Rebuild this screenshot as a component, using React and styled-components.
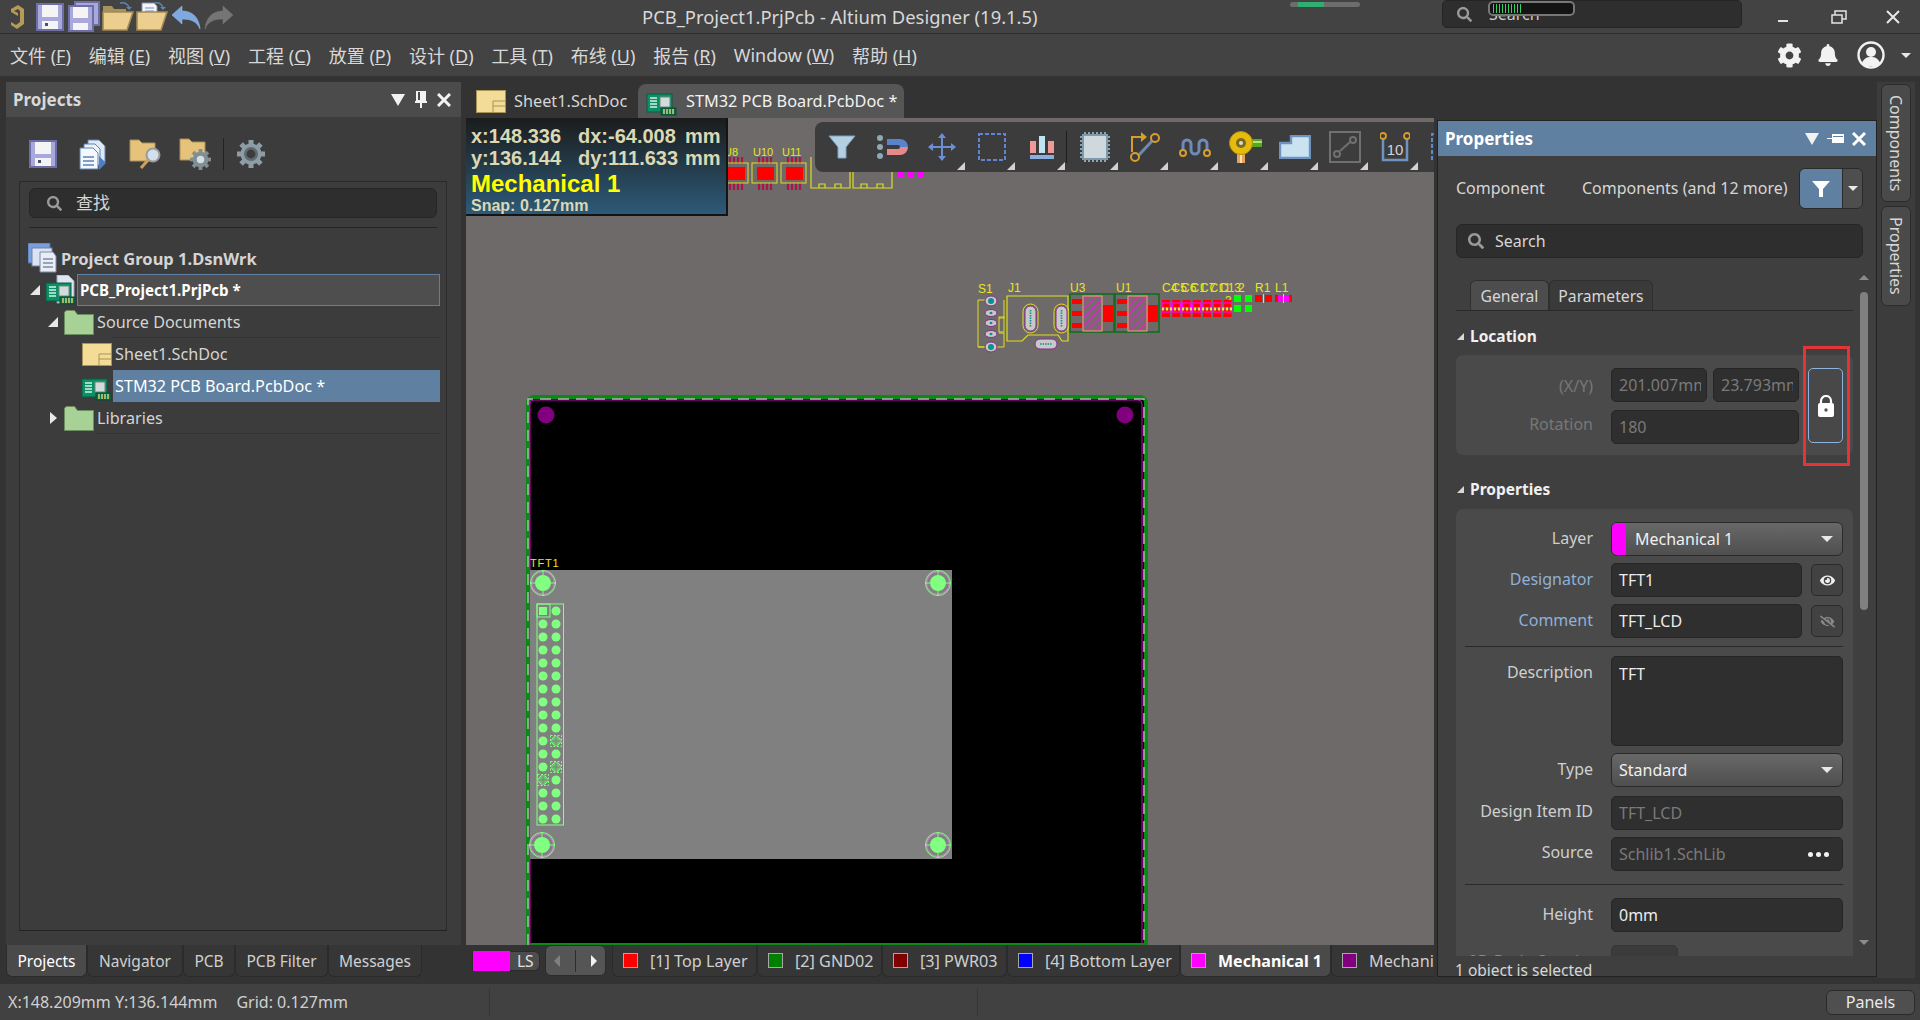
import React from 'react';
import styled, { createGlobalStyle } from 'styled-components';
import { FaCog, FaBell, FaSearch, FaEye, FaEyeSlash } from 'react-icons/fa';

const ui = `"Noto Sans", "Noto Sans CJK SC", sans-serif`;
const Global = createGlobalStyle`
  html, body { margin: 0; padding: 0; background: #333; }
  * { box-sizing: border-box; }
  body { font-family: ${ui}; color: #d6d6d6; }
  svg { display: block; flex: none; }
`;
const Root = styled.div`width:1920px;height:1020px;overflow:hidden;display:flex;flex-direction:column;background:#333;`;

/* title bar */
const TitleBar = styled.div`height:34px;flex:none;display:flex;align-items:center;background:#434343;border-bottom:1px solid #2f2f2f;`;
const Quick = styled.div`width:642px;flex:none;display:flex;align-items:center;padding-left:9px;`;
const QuickIcon = styled.span`display:block;margin-left:${p=>p.$ml||0}px;`;
const TitleText = styled.div`width:648px;flex:none;font-size:18.4px;color:#d8d8d8;white-space:nowrap;`;
const MiniBar = styled.div`width:70px;flex:none;height:5px;margin-top:-24px;border-radius:3px;background:#6d6d6d;overflow:hidden;&::before{content:"";display:block;width:26px;height:5px;margin-left:8px;background:#2fae6f;}`;
const TopSearch = styled.div`position:relative;flex:none;margin-left:82px;width:300px;height:28px;margin-top:-5px;border-radius:5px;background:#2e2e2e;border:1px solid #252525;display:flex;align-items:center;padding-left:14px;gap:17px;font-size:16px;color:#ccc;svg{color:#9a9a9a;}`;
const Pill = styled.div`position:absolute;left:45px;top:0;width:87px;height:15px;border-radius:5px;background:#141414;border:2px solid #777;display:flex;align-items:center;padding-left:3px;gap:2px;`;
const Tick = styled.i`display:block;width:1px;height:9px;background:#35d060;`;
const WinBtns = styled.div`margin-left:36px;flex:none;display:flex;align-items:center;`;
const WinBtn = styled.span`display:block;width:${p=>p.$w}px;color:#e0e0e0;`;

/* menu */
const MenuBar = styled.div`height:42px;flex:none;display:flex;align-items:center;padding-left:10px;gap:17.8px;background:#434343;font-size:18px;color:#d8d8d8;`;
const MenuItem = styled.span`white-space:nowrap;`;
const MenuRight = styled.div`margin-left:auto;display:flex;align-items:center;color:#f2f2f2;padding-right:9px;`;
const MenuIcon = styled.span`display:block;margin-left:${p=>p.$ml}px;`;
const Caret = styled.i`display:block;width:0;height:0;border-left:${p=>p.$s||5}px solid transparent;border-right:${p=>p.$s||5}px solid transparent;border-top:${p=>p.$t||p.$s||5}px solid ${p=>p.$c||'#e8e8e8'};margin-left:${p=>p.$ml||0}px;`;

/* main */
const Main = styled.div`height:908px;flex:none;display:flex;background:#333;`;
const LeftCol = styled.div`width:461px;flex:none;padding:6px 0 0 6px;display:flex;flex-direction:column;`;
const Panel = styled.div`height:863px;background:#3c3c3c;display:flex;flex-direction:column;`;
const PanelHead = styled.div`height:35px;flex:none;background:${p=>p.$active?'#5f80a1':'#4b4b4b'};display:flex;align-items:center;padding:0 10px 0 7px;font-size:17px;font-weight:700;color:${p=>p.$active?'#fff':'#d8d8d8'};`;
const HeadTools = styled.div`margin-left:auto;display:flex;align-items:center;gap:${p=>p.$gap||10}px;`;
const ToolStrip = styled.div`height:64px;flex:none;display:flex;align-items:center;padding:10px 0 0 23px;`;
const StripSep = styled.i`display:block;width:1px;height:32px;background:#222;margin:0 13px 0 11px;`;
const StripIcon = styled.span`display:block;margin-right:${p=>p.$mr||0}px;`;
const TreeBox = styled.div`height:750px;margin:0 14px 0 13px;border:1px solid #2a2a2a;border-bottom-color:#222;display:flex;flex-direction:column;`;
const SearchField = styled.div`height:${p=>p.$h||30}px;flex:none;margin:${p=>p.$m||'6px 9px 0'};background:#2e2e2e;border:1px solid #262626;border-radius:6px;display:flex;align-items:center;padding-left:${p=>p.$pad||17}px;gap:${p=>p.$gap||14}px;font-size:${p=>p.$fs||17}px;color:#d6d6d6;svg{color:#9a9a9a;}`;
const SearchLabel = styled.span`margin-top:${p=>p.$up?-3:-1}px;`;
const TreeRule0 = styled.div`height:1px;background:#262626;margin:9px 9px 0;`;
const Tree = styled.div`margin-top:14px;display:flex;flex-direction:column;`;
const Row = styled.div`height:32px;flex:none;display:flex;align-items:center;padding-left:${p=>p.$pad}px;font-size:16.2px;color:#d4d4d4;white-space:nowrap;`;
const Rule = styled.div`height:1px;margin:-1px 6px 0 ${p=>p.$left}px;background:#333;`;
const Exp = styled.span`display:flex;width:${p=>p.$w}px;flex:none;align-items:center;`;
const TriOpen = styled.i`display:block;width:0;height:0;border-left:10px solid transparent;border-bottom:10px solid #e8e8e8;`;
const TriClosed = styled.i`display:block;width:0;height:0;border-top:6px solid transparent;border-bottom:6px solid transparent;border-left:7px solid #e8e8e8;margin-left:2px;`;
const RowText = styled.span`margin-left:${p=>p.$ml||3}px;font-weight:${p=>p.$bold?700:400};font-size:${p=>p.$bold?'16.5px':'inherit'};`;
const RowBox = styled.div`margin-right:6px;flex:1;height:32px;display:flex;align-items:center;padding-left:2px;font-weight:${p=>p.$focus?700:400};font-size:${p=>p.$focus?'15.1px':'16.2px'};color:#fff;background:${p=>p.$focus?'#4e4e4e':'#5f80a1'};border:${p=>p.$focus?'1px solid #5f80a1':'none'};`;

const BottomTabs = styled.div`height:32px;flex:none;display:flex;`;
const BTab = styled.div`width:${p=>p.$w}px;flex:none;height:32px;display:flex;align-items:center;justify-content:center;font-size:15.5px;white-space:nowrap;background:${p=>p.$on?'#4a4a4a':'#363636'};color:${p=>p.$on?'#fff':'#cfcfcf'};border:1px solid #2b2b2b;border-top:none;border-radius:0 0 6px 6px;`;
const LayerTab = styled.div`width:${p=>p.$w}px;flex:none;height:32px;display:flex;align-items:center;padding-left:10px;gap:12px;font-size:${p=>p.$on?16:16.2}px;font-weight:${p=>p.$on?700:400};white-space:nowrap;background:${p=>p.$on?'#4a4a4a':'#363636'};color:${p=>p.$on?'#fff':'#cfcfcf'};border:1px solid #2b2b2b;border-top:none;border-radius:0 0 6px 6px;`;

/* center */
const Center = styled.div`width:968px;flex:none;margin-left:5px;display:flex;flex-direction:column;`;
const DocTabs = styled.div`height:42px;flex:none;padding-top:8px;display:flex;`;
const DocTab = styled.div`display:flex;align-items:center;height:34px;width:${p=>p.$w}px;flex:none;padding-left:${p=>p.$pad}px;gap:8px;font-size:16.3px;white-space:nowrap;color:${p=>p.$on?'#f2f2f2':'#d6d6d6'};background:${p=>p.$on?'#565656':'transparent'};border-radius:8px 8px 0 0;`;
const Canvas = styled.div`position:relative;height:827px;flex:none;background:#6e6a6a;overflow:hidden;`;
const Hud = styled.div`position:absolute;left:0;top:0;width:262px;height:98px;padding:7px 0 0 5px;background:linear-gradient(#1b1c1c,#2d5a78);border:2px solid #141414;border-left:none;border-top:none;font-family:"Liberation Sans",sans-serif;font-weight:700;color:#dcd8b4;`;
const HudGrid = styled.div`display:grid;grid-template-columns:107px 107px auto;font-size:20px;line-height:22px;white-space:nowrap;`;
const HudLayer = styled.div`font-size:24px;line-height:27px;margin-top:1px;color:#ff0;`;
const HudSnap = styled.div`font-size:16px;line-height:18px;`;
const FloatBar = styled.div`position:absolute;left:349px;top:4px;width:619px;height:50px;border-radius:8px 0 0 8px;background:#3c3c3c;display:flex;align-items:center;overflow:hidden;`;
const Tool = styled.div`position:relative;width:50px;height:50px;flex:none;padding-left:4px;display:flex;align-items:center;justify-content:center;${p=>p.$tri?`&::after{content:"";position:absolute;right:0;bottom:2px;width:0;height:0;border-left:8px solid transparent;border-bottom:8px solid #d2d2d2;}`:''}`;
const ToolSep = styled.i`display:block;width:1px;height:32px;background:#1e1e1e;flex:none;margin:0 1px;`;
const Board = styled.svg`position:absolute;left:0;top:0;`;
const LayerBar = styled.div`height:32px;flex:none;display:flex;overflow:hidden;align-items:flex-start;`;
const LsGroup = styled.div`margin:6px 5px 0 6px;flex:none;width:68px;height:20px;display:flex;border-radius:0 6px 6px 0;background:#4d4d4d;border:1px solid #2b2b2b;font-size:15.5px;color:#e0e0e0;align-items:center;`;
const LsSwatch = styled.i`display:block;width:37px;height:20px;background:#f0f;`;
const LsText = styled.span`margin-left:7px;`;
const NavBtns = styled.div`width:61px;height:31px;flex:none;margin-right:6px;display:flex;align-items:center;justify-content:space-around;background:#555;border:1px solid #2b2b2b;border-radius:6px;`;
const Arrow = styled.i`display:block;width:0;height:0;border-top:6px solid transparent;border-bottom:6px solid transparent;${p=>p.$left?'border-right:6px solid #808080;':'border-left:6px solid #f2f2f2;'}`;
const NavSep = styled.i`display:block;width:1px;height:22px;background:#2e2e2e;`;
const Swatch = styled.i`display:block;width:15px;height:15px;flex:none;background:${p=>p.$c};border:1px solid #a8a8a8;`;

/* right */
const Right = styled.div`width:486px;flex:none;display:flex;`;
const Props = styled.div`width:440px;height:857px;margin:44px 0 0 3px;flex:none;background:#3f3f3f;border:1px solid #222;display:flex;flex-direction:column;overflow:hidden;`;
const FilterRow = styled.div`height:41px;flex:none;margin:12px 13px 0 18px;display:flex;align-items:center;font-size:16px;color:#d6d6d6;white-space:nowrap;`;
const FilterA = styled.span`width:126px;flex:none;margin-top:-2px;`;
const FilterB = styled.span`width:217px;flex:none;margin-top:-2px;`;
const FilterBtn = styled.div`width:64px;height:41px;flex:none;display:flex;border:1px solid #2a2a2a;border-radius:6px;overflow:hidden;`;
const FilterOn = styled.div`width:43px;background:#5f80a1;display:flex;align-items:center;justify-content:center;border-right:1px solid #2a2a2a;`;
const FilterMore = styled.div`flex:1;background:#4e4e4e;display:flex;align-items:center;justify-content:center;`;
const ScrollArea = styled.div`height:687px;flex:none;margin-top:11px;display:flex;overflow:hidden;`;
const Content = styled.div`width:397px;flex:none;margin-left:18px;`;
const TabRow = styled.div`margin-top:11px;height:31px;display:flex;padding-left:14px;border-bottom:1px solid #2a2a2a;`;
const PTab = styled.div`height:30px;width:${p=>p.$w}px;flex:none;display:flex;align-items:center;justify-content:center;font-size:15.7px;border:1px solid #2f2f2f;border-bottom:none;border-radius:6px 6px 0 0;background:${p=>p.$on?'#4d4d4d':'#3a3a3a'};color:#d6d6d6;`;
const SecHead = styled.div`height:20px;margin:${p=>p.$m};display:flex;align-items:center;gap:6px;font-size:15.5px;font-weight:700;color:#f0f0f0;`;
const SmallTri = styled.i`display:block;width:0;height:0;border-left:7px solid transparent;border-bottom:7px solid #d8d8d8;`;
const LocBox = styled.div`position:relative;height:100px;padding:13px 0 0;display:flex;align-items:flex-start;background:#4a4a4a;border-radius:7px;`;
const LocGrid = styled.div`width:343px;flex:none;display:grid;grid-template-columns:155px 1fr;row-gap:8px;grid-template-rows:34px 34px;`;
const Pair = styled.div`display:flex;gap:6px;`;
const Label = styled.div`text-align:right;padding-right:18px;font-size:16px;line-height:${p=>p.$lh||32}px;white-space:nowrap;color:${p=>p.$c||'#cfcfcf'};`;
const Input = styled.div`height:${p=>p.$h||34}px;width:${p=>p.$w?p.$w+'px':'auto'};flex:none;background:#2f2f2f;border:1px solid #262626;border-radius:5px;padding:0 5px 0 7px;display:flex;align-items:${p=>p.$top?'flex-start':'center'};justify-content:space-between;font-size:16px;color:${p=>p.$dim?'#7a7a7a':'#ececec'};`;
const Clip = styled.span`display:block;overflow:hidden;white-space:nowrap;line-height:20px;padding-top:${p=>p.$pt||0}px;`;
const LockBtn = styled.div`width:35px;height:75px;margin-left:9px;display:flex;align-items:center;justify-content:center;background:#484848;border:1px solid #8db4dc;border-radius:5px;`;
const RedMark = styled.div`position:absolute;left:347px;top:-9px;width:47px;height:120px;border:3px solid #e63333;`;
const PropBox = styled.div`background:#4a4a4a;border-radius:7px 7px 0 0;padding:13px 10px 0 0;height:460px;overflow:hidden;`;
const FormRow = styled.div`display:grid;grid-template-columns:155px 1fr ${p=>p.$btn?'41px':''};margin-top:${p=>p.$mt||0}px;`;
const Drop = styled.div`height:34px;display:flex;align-items:center;justify-content:space-between;padding-right:9px;border:1px solid #2a2a2a;border-radius:6px;background:linear-gradient(#686868,#4f4f4f);font-size:16px;color:#f0f0f0;overflow:hidden;`;
const DropSwatch = styled.i`display:block;width:14px;height:34px;background:#f0f;margin-right:9px;`;
const DropText = styled.span`flex:1;padding-left:${p=>p.$pl||0}px;`;
const SquareBtn = styled.div`width:32px;height:32px;margin:1px 0 0 9px;display:flex;align-items:center;justify-content:center;background:#424242;border:1px solid #2a2a2a;border-radius:5px;color:${p=>p.$dim?'#8a8a8a':'#eee'};`;
const Hr = styled.div`height:1px;margin:${p=>p.$m} 0 ${p=>p.$m2} 9px;background:#2a2a2a;`;
const Dots = styled.span`display:flex;gap:3px;margin-right:8px;`;
const Dot = styled.i`display:block;width:5px;height:5px;border-radius:50%;background:#f2f2f2;`;
const OpacityRow = styled.div`display:flex;opacity:.55;`;
const Scroll = styled.div`width:9px;flex:none;margin-left:6px;display:flex;flex-direction:column;align-items:center;`;
const ScrollUp = styled.i`display:block;width:0;height:0;margin-top:6px;border-left:5px solid transparent;border-right:5px solid transparent;border-bottom:5px solid #8c8c8c;`;
const ScrollDown = styled.i`display:block;width:0;height:0;margin-top:330px;border-left:5px solid transparent;border-right:5px solid transparent;border-top:5px solid #8c8c8c;`;
const Thumb = styled.i`display:block;width:8px;height:318px;margin-top:12px;border-radius:4px;background:#808080;`;
const Selected = styled.div`height:20px;flex:none;padding-left:17px;font-size:15.5px;line-height:28px;color:#d6d6d6;white-space:nowrap;`;
const Strip = styled.div`width:38px;height:896px;margin:6px 0 0 0;flex:none;background:#3c3c3c;padding:2px 0 0 4px;`;
const VTab = styled.div`writing-mode:vertical-rl;width:30px;height:${p=>p.$h}px;margin-bottom:4px;display:flex;align-items:center;justify-content:center;font-size:16px;color:#d6d6d6;background:#4a4a4a;border:1px solid #2b2b2b;border-radius:6px;`;

/* status */
const Status = styled.div`height:36px;flex:none;display:flex;align-items:center;background:#414141;font-size:16px;color:#d0d0d0;white-space:nowrap;`;
const StatText = styled.div`width:489px;flex:none;padding-left:8px;`;
const StatGrid = styled.span`margin-left:19px;`;
const StatDiv = styled.i`display:block;width:1px;height:28px;background:#353535;flex:none;margin-left:${p=>p.$ml||0}px;`;
const PanelsBtn = styled.div`margin-left:auto;margin-right:5px;width:89px;height:25px;display:flex;align-items:center;justify-content:center;background:#4f4f4f;border:1px solid #2a2a2a;border-radius:6px;color:#e8e8e8;`;

/* icons */
const Logo = () => <svg width="17" height="26" viewBox="0 0 17 26"><path d="M2 5 9 1l6 4v15l-7 5-6-4 0-3 5 3 4-3V7L9 5 5 7l4 2v3L2 8z" fill="#b79a55"/></svg>;
const Floppy = ({s=28}) => <svg width={s} height={s} viewBox="0 0 28 28"><rect width="28" height="28" fill="#6e6ea6"/><rect x="2" y="2" width="24" height="24" fill="#a8a8dc"/><rect x="6" y="2" width="16" height="12" fill="#f4f4f4"/><rect x="6" y="18" width="16" height="8" fill="#f4f4f4"/><rect x="9" y="20" width="3" height="3" fill="#456"/></svg>;
const FloppyAll = () => <svg width="32" height="31" viewBox="0 0 32 31"><rect x="6" y="0" width="26" height="25" fill="#6e6ea6"/><rect x="8" y="2" width="22" height="21" fill="#a8a8dc"/><rect x="0" y="4" width="26" height="27" fill="#6e6ea6"/><rect x="2" y="6" width="22" height="23" fill="#a8a8dc"/><rect x="5" y="6" width="15" height="11" fill="#f4f4f4"/><rect x="5" y="22" width="15" height="7" fill="#f4f4f4"/></svg>;
const OpenFolder = ({doc}) => <svg width="32" height="31" viewBox="0 0 32 31">
  {doc && <path d="M6 2h12l3 3v16H6z" fill="#f4f6fb" stroke="#8a95a8"/>}
  {doc && <path d="M9 7h9M9 10h9M9 13h9" stroke="#7a8fb8"/>}
  {!doc && <path d="M1 8V5h9l2 3h12v4H1z" fill="#a8915c"/>}
  <path d="M1 29V11h24l6 0-6 18z" fill="#eccf8e" stroke="#a48a55" strokeWidth="1.6"/>
  <path d="M18 2c4-1 7 0 9 4" stroke="#5b87b0" strokeWidth="1.5" fill="none"/><path d="M24 6h6l-3 3z" fill="#5b87b0"/>
</svg>;
const UndoGlyph = styled.svg`transform:${p=>p.$flip?'scaleX(-1)':'none'};`;
const Undo = ({gray}) => <UndoGlyph $flip={gray} width="30" height="26" viewBox="0 0 30 26"><path d="M1 11 11 2v5c10 0 17 6 18 18-3-7-8-10-18-10v5z" fill={gray?'#757575':'#7ea8e0'} stroke={gray?'#757575':'#a6c5ef'} strokeWidth=".5"/></UndoGlyph>;
const Restore = () => <svg width="16" height="14" viewBox="0 0 16 14" fill="none" stroke="#e4e4e4" strokeWidth="1.5"><rect x="1" y="5" width="10" height="8"/><path d="M4 5V1h11v8h-4"/></svg>;
const Close = ({s=14,w=2,c='#e8e8e8'}) => <svg width={s} height={s} viewBox="0 0 14 14"><path d="M1 1l12 12M13 1 1 13" stroke={c} strokeWidth={w}/></svg>;
const UserIcon = () => <svg width="28" height="28" viewBox="0 0 28 28" fill="none"><circle cx="14" cy="14" r="12.5" stroke="#f2f2f2" strokeWidth="2.4"/><circle cx="14" cy="11" r="5" fill="#f2f2f2"/><path d="M5 22c2-5 5-6 9-6s7 1 9 6l-3 3H8z" fill="#f2f2f2"/></svg>;
const Pin = ({flat}) => flat
  ? <svg width="17" height="12" viewBox="0 0 17 12"><path d="M0 5h5V1h12v9H5V6H0z" fill="#fff"/><path d="M6 3h10v1H6z" fill="#5f80a1"/></svg>
  : <svg width="12" height="17" viewBox="0 0 12 17"><path d="M1 0h10v10h1v2H7v5H5v-5H0v-2h1z" fill="#f2f2f2"/><path d="M3 1h2v8H3z" fill="#4b4b4b"/></svg>;
const PanelTri = () => <Caret $s={7} $t={12} $c="#f2f2f2"/>;
const PcbDoc = ({page}) => <svg width="32" height="30" viewBox="0 0 32 30">
  {page && <path d="M12 0h11l6 6v22H12z" fill="#dfe6f2" stroke="#9aa6ba"/>}
  <rect x="1" y="8" width="25" height="18" fill="#0d8f66" stroke="#075c42"/>
  <path d="M4 12h7M4 15h7M4 18h7M4 21h7" stroke="#d8f2e8" strokeWidth="1.3"/>
  <rect x="14" y="11" width="10" height="10" fill="#d5dadd" stroke="#6a8a7a"/>
  <rect x="15" y="22" width="15" height="7" fill="#0a6d4e" stroke="#064a36"/><path d="M18 23v5M21 23v5M24 23v5M27 23v5" stroke="#e6d870" strokeWidth="1.4"/>
</svg>;
const SchDoc = () => <svg width="30" height="23" viewBox="0 0 30 23"><rect x=".5" y=".5" width="29" height="22" fill="#f2dc96" stroke="#a99358"/><path d="M17 22V11h12M17 16h12" stroke="#a99358" fill="none"/></svg>;
const Folder = () => <svg width="30" height="25" viewBox="0 0 30 25"><path d="M.5 24.5V2l2-1.5h8l3 4h16v20z" fill="#a7d195" stroke="#6e8c62"/></svg>;
const GroupIcon = () => <svg width="32" height="30" viewBox="0 0 32 30"><rect x="0" y="0" width="22" height="20" fill="#7b9fdc" stroke="#4f73b3"/><rect x="4" y="5" width="20" height="18" fill="#dbe3f2" stroke="#7284a6"/><path d="M12 9h13l3 4v16H12z" fill="#e8edf6" stroke="#7d8aa5"/><path d="M15 16h10M15 20h10M15 24h10" stroke="#7d8aa5" strokeWidth="1.4"/></svg>;
const Copies = () => <svg width="29" height="31" viewBox="0 0 29 31"><path d="M9 1h11l6 6v16H9z" fill="#dfe8f5" stroke="#5d83b8"/><path d="M5 5h11l5 5v16H5z" fill="#eef3fa" stroke="#5d83b8"/><path d="M1 9h13l5 5v16H1z" fill="#f4f7fc" stroke="#5d83b8"/><path d="M4 18h11M4 22h11M4 26h11" stroke="#5d83b8" strokeWidth="1.6"/><path d="M20 17l7 7-7 7z" fill="#4e7fc4"/></svg>;
const FolderFind = () => <svg width="33" height="31" viewBox="0 0 33 31"><path d="M1 22V1h9l3 3h13v18z" fill="#e6c27a" stroke="#a88f5b"/><circle cx="24" cy="16" r="6.5" fill="#d4dfee" stroke="#9a9a9a" strokeWidth="2"/><path d="M19 21l-7 8" stroke="#c9a25f" strokeWidth="3"/></svg>;
const Gear = ({s}) => <svg width={s} height={s} viewBox="0 0 28 28"><g fill="#8d9da6"><circle cx="14" cy="14" r="10.5"/>{[0,45,90,135,180,225,270,315].map(a=><rect key={a} x="11.5" y="0" width="5" height="6" transform={`rotate(${a} 14 14)`}/>)}</g><circle cx="14" cy="14" r="7" fill="#5e6a70"/><circle cx="14" cy="14" r="4.4" fill="#3c3c3c"/></svg>;
const Gear2 = () => <g transform="scale(.75)"><g fill="#7f8f98"><circle cx="14" cy="14" r="10.5"/>{[0,45,90,135,180,225,270,315].map(a=><rect key={a} x="11.5" y="0" width="5" height="6" transform={`rotate(${a} 14 14)`}/>)}</g><circle cx="14" cy="14" r="5" fill="#d8dde0"/></g>;
const FolderGear = () => <svg width="33" height="33" viewBox="0 0 33 33"><path d="M1 22V1h9l3 3h13v18z" fill="#e6c27a" stroke="#a88f5b"/><g transform="translate(11 11)"><Gear2/></g></svg>;

const IFilter = () => <svg width="28" height="24" viewBox="0 0 28 24"><path d="M1 1h26L18 12v11H10V12z" fill="#b5cfe2" stroke="#7fa4c2"/></svg>;
const IMagnet = () => <svg width="32" height="24" viewBox="0 0 32 24"><circle cx="4" cy="3" r="3" fill="#8fa9b4"/><circle cx="4" cy="12" r="3" fill="#8fa9b4"/><circle cx="4" cy="21" r="3" fill="#8fa9b4"/><path d="M11 4h13a8 8 0 0 1 8 8H24a2 2 0 0 0-2-2H11z" fill="#5a83cc"/><path d="M11 20h13a8 8 0 0 0 8-8H24a2 2 0 0 1-2 2H11z" fill="#e58a8a"/></svg>;
const ICross = () => <svg width="28" height="28" viewBox="0 0 28 28" fill="#6c8fd4"><path d="M13 4h2v9h9v2h-9v9h-2v-9H4v-2h9z"/><path d="M14 0l4 5h-8zM14 28l-4-5h8zM0 14l5-4v8zM28 14l-5 4v-8z"/></svg>;
const IDashed = () => <svg width="28" height="28" viewBox="0 0 28 28"><rect x="1" y="1" width="26" height="26" fill="none" stroke="#6085d6" strokeWidth="2" strokeDasharray="4 2"/></svg>;
const IBars = () => <svg width="24" height="24" viewBox="0 0 24 24"><rect y="6" width="6" height="12" fill="#ef9a98"/><rect x="9" y="1" width="6" height="17" fill="#bfe4f4"/><rect x="18" y="6" width="6" height="12" fill="#ef9a98"/><rect y="20" width="24" height="4" fill="#8aaee0"/></svg>;
const IChip = () => <svg width="30" height="30" viewBox="0 0 30 30"><path d="M5 0v30M9 0v30M13 0v30M17 0v30M21 0v30M25 0v30M0 5h30M0 9h30M0 13h30M0 17h30M0 21h30M0 25h30" stroke="#8aa3b5" strokeWidth="2"/><rect x="3" y="3" width="24" height="24" fill="#cfd8dd" stroke="#7f99aa" strokeWidth="2"/></svg>;
const IRoute = () => <svg width="30" height="30" viewBox="0 0 30 30" fill="none"><path d="M2 20V5h11" stroke="#d79f2a" strokeWidth="2"/><path d="M11 0l6 5-6 5z" fill="#d79f2a"/><path d="M8 24 22 9" stroke="#6f8ab0" strokeWidth="3"/><circle cx="5" cy="25" r="4" stroke="#d79f2a" strokeWidth="2"/><circle cx="25" cy="6" r="4" stroke="#d79f2a" strokeWidth="2"/></svg>;
const IMeander = () => <svg width="32" height="20" viewBox="0 0 32 20" fill="none"><path d="M4 14V7a4 4 0 0 1 8 0v6a4 4 0 0 0 8 0V7a4 4 0 0 1 8 0v7" stroke="#6f8ab8" strokeWidth="3"/><circle cx="4" cy="16" r="3" stroke="#d79f2a" strokeWidth="2"/><circle cx="28" cy="16" r="3" stroke="#d79f2a" strokeWidth="2"/></svg>;
const IVia = () => <svg width="33" height="32" viewBox="0 0 33 32"><rect x="21" y="8" width="12" height="8" fill="#56a81e"/><rect x="21" y="10" width="12" height="2" fill="#b6e07a"/><rect x="8" y="20" width="8" height="12" fill="#e7a35c"/><rect x="11" y="20" width="2" height="12" fill="#fbe2b8"/><circle cx="12" cy="12" r="11.5" fill="#e6bb10" stroke="#b58d00"/><circle cx="12" cy="12" r="5" fill="#7c6a1c"/><circle cx="12" cy="12" r="2" fill="#d9d9d9"/></svg>;
const IPoly = () => <svg width="32" height="24" viewBox="0 0 32 24"><path d="M1 8h11V1h19v22H1z" fill="#cbe3ef" stroke="#6f93c0" strokeWidth="2.4"/></svg>;
const IBox = () => <svg width="32" height="32" viewBox="0 0 32 32" fill="none" stroke="#707070" strokeWidth="2"><rect x="1" y="1" width="30" height="30"/><path d="M11 20 21 11"/><circle cx="8" cy="23" r="3"/><circle cx="24" cy="9" r="3"/></svg>;
const IDim = () => <svg width="30" height="30" viewBox="0 0 30 30"><path d="M3 6v22h24V6" fill="none" stroke="#6f93c0" strokeWidth="2.5"/><circle cx="3" cy="4" r="3" fill="none" stroke="#d79f2a" strokeWidth="1.8"/><circle cx="27" cy="4" r="3" fill="none" stroke="#d79f2a" strokeWidth="1.8"/><text x="15" y="23" textAnchor="middle" fontSize="15" fill="#cfd6dc" fontFamily="Liberation Sans">10</text></svg>;
const ILock = () => <svg width="16" height="22" viewBox="0 0 16 22"><path d="M3 9V6a5 5 0 0 1 10 0v3" fill="none" stroke="#fff" strokeWidth="2.2"/><rect y="8" width="16" height="14" rx="2" fill="#fff"/><circle cx="8" cy="15" r="1.7" fill="#555"/></svg>;
const IFunnelW = () => <svg width="18" height="16" viewBox="0 0 18 16"><path d="M0 0h18l-7 8v8H7V8z" fill="#fff"/></svg>;

/* PCB drawing: coordinates are those of the page */
const Sq = ({x,y,w,h,c='#f00'}) => <rect x={x} y={y} width={w} height={h} fill={c}/>;
const Pad = ({y,big}) => <g><ellipse cx="991" cy={y} rx="6" ry={big?5:3.5} fill="#c8c8c8" stroke="#8a2a8a"/><ellipse cx="991" cy={y} rx={big?3:1.5} ry={big?3:1.2} fill="#0c8f8f"/></g>;
const Smd = ({x}) => <g>
  <rect x={x} y="294" width="44" height="38" fill="none" stroke="#0d6d18" strokeWidth="1.5"/>
  <Sq x={x+2} y="299" w="10" h="5"/><Sq x={x+2} y="311" w="10" h="5"/><Sq x={x+2} y="323" w="10" h="5"/><Sq x={x+33} y="305" w="10" h="17"/>
  <rect x={x+13} y="296" width="19" height="35" fill="url(#hatch)" stroke="#f5a070" strokeWidth="1"/>
</g>;
const Ic = ({x}) => <g>
  <path d={`M${x+2} 157v7M${x+6} 157v7M${x+10} 157v7M${x+14} 157v7M${x+2} 183v7M${x+6} 183v7M${x+10} 183v7M${x+14} 183v7`} stroke="#b0124a" strokeWidth="2.2"/>
  <Sq x={x} y="167" w="17" h="13"/><rect x={x-5} y="163" width="25" height="20" fill="none" stroke="#dede20"/>
</g>;
const Foot = ({x}) => <path d={`M${x} 157v31h39v-31M${x+8} 188v-4h6v4M${x+24} 188v-4h6v4`} fill="none" stroke="#dede20" strokeWidth="1.2"/>;
const BoardArt = () => {
  const holes=[[543,583],[938,583],[542,845],[938,845]];
  const faded=[[10,1],[12,1],[13,0]];
  const caps=[0,1,2,3,4,5,6];
  const capLabels=['C4','C5','C6','C1','C7','C11','C13'];
  return <Board width="968" height="827" viewBox="466 118 968 827">
    <defs><pattern id="hatch" width="6" height="6" patternUnits="userSpaceOnUse" patternTransform="rotate(45)"><rect width="6" height="6" fill="#7a6a70"/><rect width="1.3" height="6" fill="#e020d0"/></pattern></defs>
    <g fontFamily="Liberation Sans" fontSize="11" fill="#e6e620">
      <text x="724" y="156">U8</text><text x="753" y="156">U10</text><text x="782" y="156">U11</text>
      <text x="978" y="293" fontSize="12">S1</text><text x="1008" y="292" fontSize="12">J1</text><text x="1070" y="292" fontSize="12">U3</text><text x="1116" y="292" fontSize="12">U1</text>
      {capLabels.map((l,i)=><text key={l} x={1162+i*9.5} y="292" fontSize="12">{l}</text>)}
      <text x="1238" y="292" fontSize="12">2</text><text x="1255" y="292" fontSize="12">R1</text><text x="1275" y="292" fontSize="12">L1</text><text x="1225" y="305" fontSize="12">3</text>
    </g>
    <Ic x={728}/><Ic x={757}/><Ic x={786}/><Foot x={811}/><Foot x={853}/>
    <Sq x={897} y={172} w={7} h={5} c="#f0f"/><Sq x={907} y={172} w={7} h={5} c="#f0f"/><Sq x={917} y={172} w={7} h={5} c="#f0f"/>

    <path d="M978 300h9M978 300v47h26v-14h-5M978 347h9M1004 300v18h-5" fill="none" stroke="#dede20" strokeWidth="1"/>
    <rect x="999" y="317" width="5" height="15" fill="none" stroke="#dede20"/>
    <Pad y={301} big/><Pad y={313}/><Pad y={323}/><Pad y={334}/><Pad y={347} big/>
    <path d="M1007 296h61v45h-6l-4-6h-30l-6 6h-15z" fill="none" stroke="#dede20" strokeWidth="1.2"/>
    <rect x="1023" y="304" width="15" height="29" rx="7.5" fill="none" stroke="#dede20"/><rect x="1025" y="306" width="11" height="25" rx="5.5" fill="#c8c8c8" stroke="#8a2a8a"/><path d="M1030.5 310v17" stroke="#0c8f8f" strokeWidth="1.6" strokeDasharray="1.5 1"/>
    <rect x="1054" y="304" width="15" height="29" rx="7.5" fill="none" stroke="#dede20"/><rect x="1056" y="306" width="11" height="25" rx="5.5" fill="#c8c8c8" stroke="#8a2a8a"/><path d="M1061.5 310v17" stroke="#0c8f8f" strokeWidth="1.6" strokeDasharray="1.5 1"/>
    <rect x="1035" y="339" width="22" height="10" rx="5" fill="#c8c8c8" stroke="#8a2a8a"/><path d="M1040 344h12" stroke="#0c8f8f" strokeWidth="1.6" strokeDasharray="1.5 1"/>
    <Smd x={1070}/><Smd x={1115}/>
    {caps.map(i=>{const x=1162+i*10.25;return <g key={i}><Sq x={x} y={300} w={8} h={7}/><Sq x={x} y={310} w={8} h={7}/><rect x={x} y={303} width="8" height="9" fill="none" stroke="#f0f" strokeWidth="1.2"/></g>;})}
    <path d="M1162 309h71" stroke="#e8e840" strokeWidth="3" strokeDasharray="2 2"/>
    <Sq x={1234} y={295} w={7} h={7} c="#0f0"/><Sq x={1234} y={305} w={7} h={7} c="#0f0"/><Sq x={1245} y={295} w={7} h={7} c="#0f0"/><Sq x={1245} y={305} w={7} h={7} c="#0f0"/>
    <Sq x={1255} y={295} w={7} h={7}/><Sq x={1265} y={295} w={7} h={7}/><path d="M1263.5 294v9" stroke="#e8e840"/>
    <Sq x={1275} y={295} w={6} h={7}/><Sq x={1286} y={295} w={6} h={7}/><rect x="1278" y="295" width="11" height="7" fill="#f0f"/><path d="M1283.5 294v9" stroke="#e8e840"/>

    <path d="M528 945V403a6 6 0 0 1 6-6h606a6 6 0 0 1 6 6v542z" fill="#000" stroke="#0a8a14" strokeWidth="4"/>
    <path d="M530 945V404a4 4 0 0 1 4-4h604a4 4 0 0 1 4 4v541" fill="none" stroke="#d000c8" strokeWidth="1"/>
    <path d="M528 945V399h616v546" fill="none" stroke="#b0b0b0" strokeWidth="1.6" strokeDasharray="11 7"/>
    <circle cx="546" cy="415" r="8.5" fill="#800080"/><circle cx="1125" cy="415" r="8.5" fill="#800080"/>
    <text x="530" y="567" fontFamily="Liberation Sans" fontSize="11" fill="#e6e620" letterSpacing=".8">TFT1</text>
    <rect x="530" y="570" width="422" height="289" fill="#808080"/>
    {holes.map(([x,y])=><g key={x+'-'+y}>
      <circle cx={x} cy={y} r="12.5" fill="none" stroke="#80ff80" strokeWidth="1"/><circle cx={x} cy={y} r="11.5" fill="none" stroke="#d68ad6" strokeWidth="1"/>
      <circle cx={x} cy={y} r="8" fill="#80ff80"/><path d={`M${x} ${y-13}v5M${x} ${y+8}v5M${x-13} ${y}h5M${x+8} ${y}h5`} stroke="#80ff80"/>
    </g>)}
    <rect x="537" y="604" width="26.5" height="221" fill="none" stroke="#80ff80"/><rect x="537" y="604" width="13" height="13" fill="none" stroke="#80ff80"/>
    {Array.from({length:17}).flatMap((_,r)=>[0,1].map(c=>{
      const x=543+c*13,y=611+r*13;
      if(r===0&&c===0) return <rect key="sq" x={x-4} y={y-4} width="8" height="8" fill="#80ff80"/>;
      if(faded.some(f=>f[0]===r&&f[1]===c)) return <g key={r+'-'+c} stroke="#80ff80" fill="none"><circle cx={x} cy={y} r="4.5" fill="#70c070"/><rect x={x-5.5} y={y-5.5} width="11" height="11" strokeDasharray="2 1.5"/><path d={`M${x-5} ${y}h10M${x} ${y-5}v10`} stroke="#808080"/></g>;
      return <circle key={r+'-'+c} cx={x} cy={y} r="4.5" fill="#80ff80"/>;
    }))}
  </Board>;
};

const menu=[['文件 (','F',')'],['编辑 (','E',')'],['视图 (','V',')'],['工程 (','C',')'],['放置 (','P',')'],['设计 (','D',')'],['工具 (','T',')'],['布线 (','U',')'],['报告 (','R',')'],['Window (','W',')'],['帮助 (','H',')']];
const layers=[['[1] Top Layer','#f00',145],['[2] GND02','#008000',125],['[3] PWR03','#800000',125],['[4] Bottom Layer','#00f',173],['Mechanical 1','#f0f',151],['Mechanical 2','#800080',170]];
const toolsA=[[IMagnet,false],[ICross,true],[IDashed,true],[IBars,true]];
const toolsB=[IChip,IRoute,IMeander,IVia,IPoly,IBox,IDim];

export default function App(){
  return <Root><Global/>
    <TitleBar>
      <Quick>
        <Logo/>
        <QuickIcon $ml={10}><Floppy/></QuickIcon><QuickIcon $ml={4}><FloppyAll/></QuickIcon>
        <QuickIcon $ml={2}><OpenFolder/></QuickIcon><QuickIcon $ml={2}><OpenFolder doc/></QuickIcon>
        <QuickIcon $ml={3}><Undo/></QuickIcon><QuickIcon $ml={3}><Undo gray/></QuickIcon>
      </Quick>
      <TitleText>PCB_Project1.PrjPcb - Altium Designer (19.1.5)</TitleText>
      <MiniBar/>
      <TopSearch><FaSearch size={15}/>Search
        <Pill>{Array.from({length:10}).map((_,i)=><Tick key={i}/>)}</Pill>
      </TopSearch>
      <WinBtns>
        <WinBtn $w={53}><svg width="10" height="12" viewBox="0 0 10 12"><rect y="9" width="10" height="2" fill="#e4e4e4"/></svg></WinBtn>
        <WinBtn $w={55}><Restore/></WinBtn>
        <WinBtn $w={34}><Close/></WinBtn>
      </WinBtns>
    </TitleBar>
    <MenuBar>
      {menu.map(m=><MenuItem key={m[0]}>{m[0]}<u>{m[1]}</u>{m[2]}</MenuItem>)}
      <MenuRight>
        <MenuIcon $ml={0}><FaCog size={25}/></MenuIcon>
        <MenuIcon $ml={15}><FaBell size={22}/></MenuIcon>
        <MenuIcon $ml={18}><UserIcon/></MenuIcon>
        <Caret $ml={16} $s={5}/>
      </MenuRight>
    </MenuBar>
    <Main>
      <LeftCol>
        <Panel>
          <PanelHead>Projects<HeadTools><PanelTri/><Pin/><Close s={14} w={3} c="#f2f2f2"/></HeadTools></PanelHead>
          <ToolStrip>
            <StripIcon $mr={22}><Floppy/></StripIcon><StripIcon $mr={21}><Copies/></StripIcon><StripIcon $mr={17}><FolderFind/></StripIcon><StripIcon><FolderGear/></StripIcon>
            <StripSep/><Gear s={28}/>
          </ToolStrip>
          <TreeBox>
            <SearchField><FaSearch size={15}/><SearchLabel $up>查找</SearchLabel></SearchField>
            <TreeRule0/>
            <Tree>
              <Row $pad={8}><GroupIcon/><RowText $ml={1} $bold>Project Group 1.DsnWrk</RowText></Row>
              <Row $pad={10}><Exp $w={15}><TriOpen/></Exp><PcbDoc page/><RowBox $focus>PCB_Project1.PrjPcb *</RowBox></Row>
              <Row $pad={28}><Exp $w={16}><TriOpen/></Exp><Folder/><RowText>Source Documents</RowText></Row>
              <Rule $left={92}/>
              <Row $pad={62}><SchDoc/><RowText>Sheet1.SchDoc</RowText></Row>
              <Row $pad={61}><PcbDoc/><RowBox>STM32 PCB Board.PcbDoc *</RowBox></Row>
              <Row $pad={28}><Exp $w={16}><TriClosed/></Exp><Folder/><RowText>Libraries</RowText></Row>
              <Rule $left={75}/>
            </Tree>
          </TreeBox>
        </Panel>
        <BottomTabs>
          <BTab $w={81} $on>Projects</BTab><BTab $w={96}>Navigator</BTab><BTab $w={52}>PCB</BTab><BTab $w={93}>PCB Filter</BTab><BTab $w={94}>Messages</BTab>
        </BottomTabs>
      </LeftCol>
      <Center>
        <DocTabs>
          <DocTab $w={172} $pad={10}><SchDoc/>Sheet1.SchDoc</DocTab>
          <DocTab $w={266} $pad={8} $on><PcbDoc/>STM32 PCB Board.PcbDoc *</DocTab>
        </DocTabs>
        <Canvas>
          <BoardArt/>
          <Hud>
            <HudGrid><span>x:148.336</span><span>dx:-64.008</span><span>mm</span><span>y:136.144</span><span>dy:111.633</span><span>mm</span></HudGrid>
            <HudLayer>Mechanical 1</HudLayer>
            <HudSnap>Snap: 0.127mm</HudSnap>
          </Hud>
          <FloatBar>
            <Tool><IFilter/></Tool>
            {toolsA.map(([I,t],i)=><Tool key={i} $tri={t}><I/></Tool>)}
            <ToolSep/>
            {toolsB.map((I,i)=><Tool key={i} $tri><I/></Tool>)}
            <Tool><IDashed/></Tool>
          </FloatBar>
        </Canvas>
        <LayerBar>
          <LsGroup><LsSwatch/><LsText>LS</LsText></LsGroup>
          <NavBtns><Arrow $left/><NavSep/><Arrow/></NavBtns>
          {layers.map(([t,c,w],i)=><LayerTab key={t} $w={w} $on={i===4}><Swatch $c={c}/>{t}</LayerTab>)}
        </LayerBar>
      </Center>
      <Right>
        <Props>
          <PanelHead $active>Properties<HeadTools $gap={8}><PanelTri/><Pin flat/><Close s={14} w={3} c="#fff"/></HeadTools></PanelHead>
          <FilterRow><FilterA>Component</FilterA><FilterB>Components (and 12 more)</FilterB>
            <FilterBtn><FilterOn><IFunnelW/></FilterOn><FilterMore><Caret $s={5}/></FilterMore></FilterBtn>
          </FilterRow>
          <SearchField $h={34} $m="15px 13px 0 18px" $pad={11} $gap={11} $fs={16}><FaSearch size={16}/><SearchLabel>Search</SearchLabel></SearchField>
          <ScrollArea>
            <Content>
              <TabRow><PTab $on $w={79}>General</PTab><PTab $w={104}>Parameters</PTab></TabRow>
              <SecHead $m="15px 0 9px 1px"><SmallTri/>Location</SecHead>
              <LocBox>
                <LocGrid>
                  <Label $c="#777" $lh={36}>(X/Y)</Label>
                  <Pair><Input $w={96} $dim><Clip>201.007mm</Clip></Input><Input $w={86} $dim><Clip>23.793mm</Clip></Input></Pair>
                  <Label $c="#777" $lh={28}>Rotation</Label>
                  <Input $dim>180</Input>
                </LocGrid>
                <LockBtn><ILock/></LockBtn>
                <RedMark/>
              </LocBox>
              <SecHead $m="24px 0 10px 1px"><SmallTri/>Properties</SecHead>
              <PropBox>
                <FormRow><Label>Layer</Label><Drop><DropSwatch/><DropText>Mechanical 1</DropText><Caret $s={6}/></Drop></FormRow>
                <FormRow $btn $mt={7}><Label $c="#8fb0d8">Designator</Label><Input>TFT1</Input><SquareBtn><FaEye size={15}/></SquareBtn></FormRow>
                <FormRow $btn $mt={7}><Label $c="#8fb0d8">Comment</Label><Input>TFT_LCD</Input><SquareBtn $dim><FaEyeSlash size={15}/></SquareBtn></FormRow>
                <Hr $m="8px" $m2="9px"/>
                <FormRow><Label>Description</Label><Input $h={90} $top><Clip $pt={7}>TFT</Clip></Input></FormRow>
                <FormRow $mt={7}><Label>Type</Label><Drop><DropText $pl={7}>Standard</DropText><Caret $s={6}/></Drop></FormRow>
                <FormRow $mt={9}><Label $lh={30}>Design Item ID</Label><Input $dim>TFT_LCD</Input></FormRow>
                <FormRow $mt={7}><Label $lh={30}>Source</Label><Input $dim>Schlib1.SchLib<Dots><Dot/><Dot/><Dot/></Dots></Input></FormRow>
                <Hr $m="13px" $m2="13px"/>
                <FormRow><Label>Height</Label><Input>0mm</Input></FormRow>
                <FormRow $mt={13}><Label $c="#888">2D Body Opacity</Label><OpacityRow><Input $w={67} $dim> </Input></OpacityRow></FormRow>
              </PropBox>
            </Content>
            <Scroll><ScrollUp/><Thumb/><ScrollDown/></Scroll>
          </ScrollArea>
          <Selected>1 object is selected</Selected>
        </Props>
        <Strip><VTab $h={118}>Components</VTab><VTab $h={100}>Properties</VTab></Strip>
      </Right>
    </Main>
    <Status>
      <StatText>X:148.209mm Y:136.144mm<StatGrid>Grid: 0.127mm</StatGrid></StatText>
      <StatDiv/><StatDiv $ml={487}/>
      <PanelsBtn>Panels</PanelsBtn>
    </Status>
  </Root>;
}
